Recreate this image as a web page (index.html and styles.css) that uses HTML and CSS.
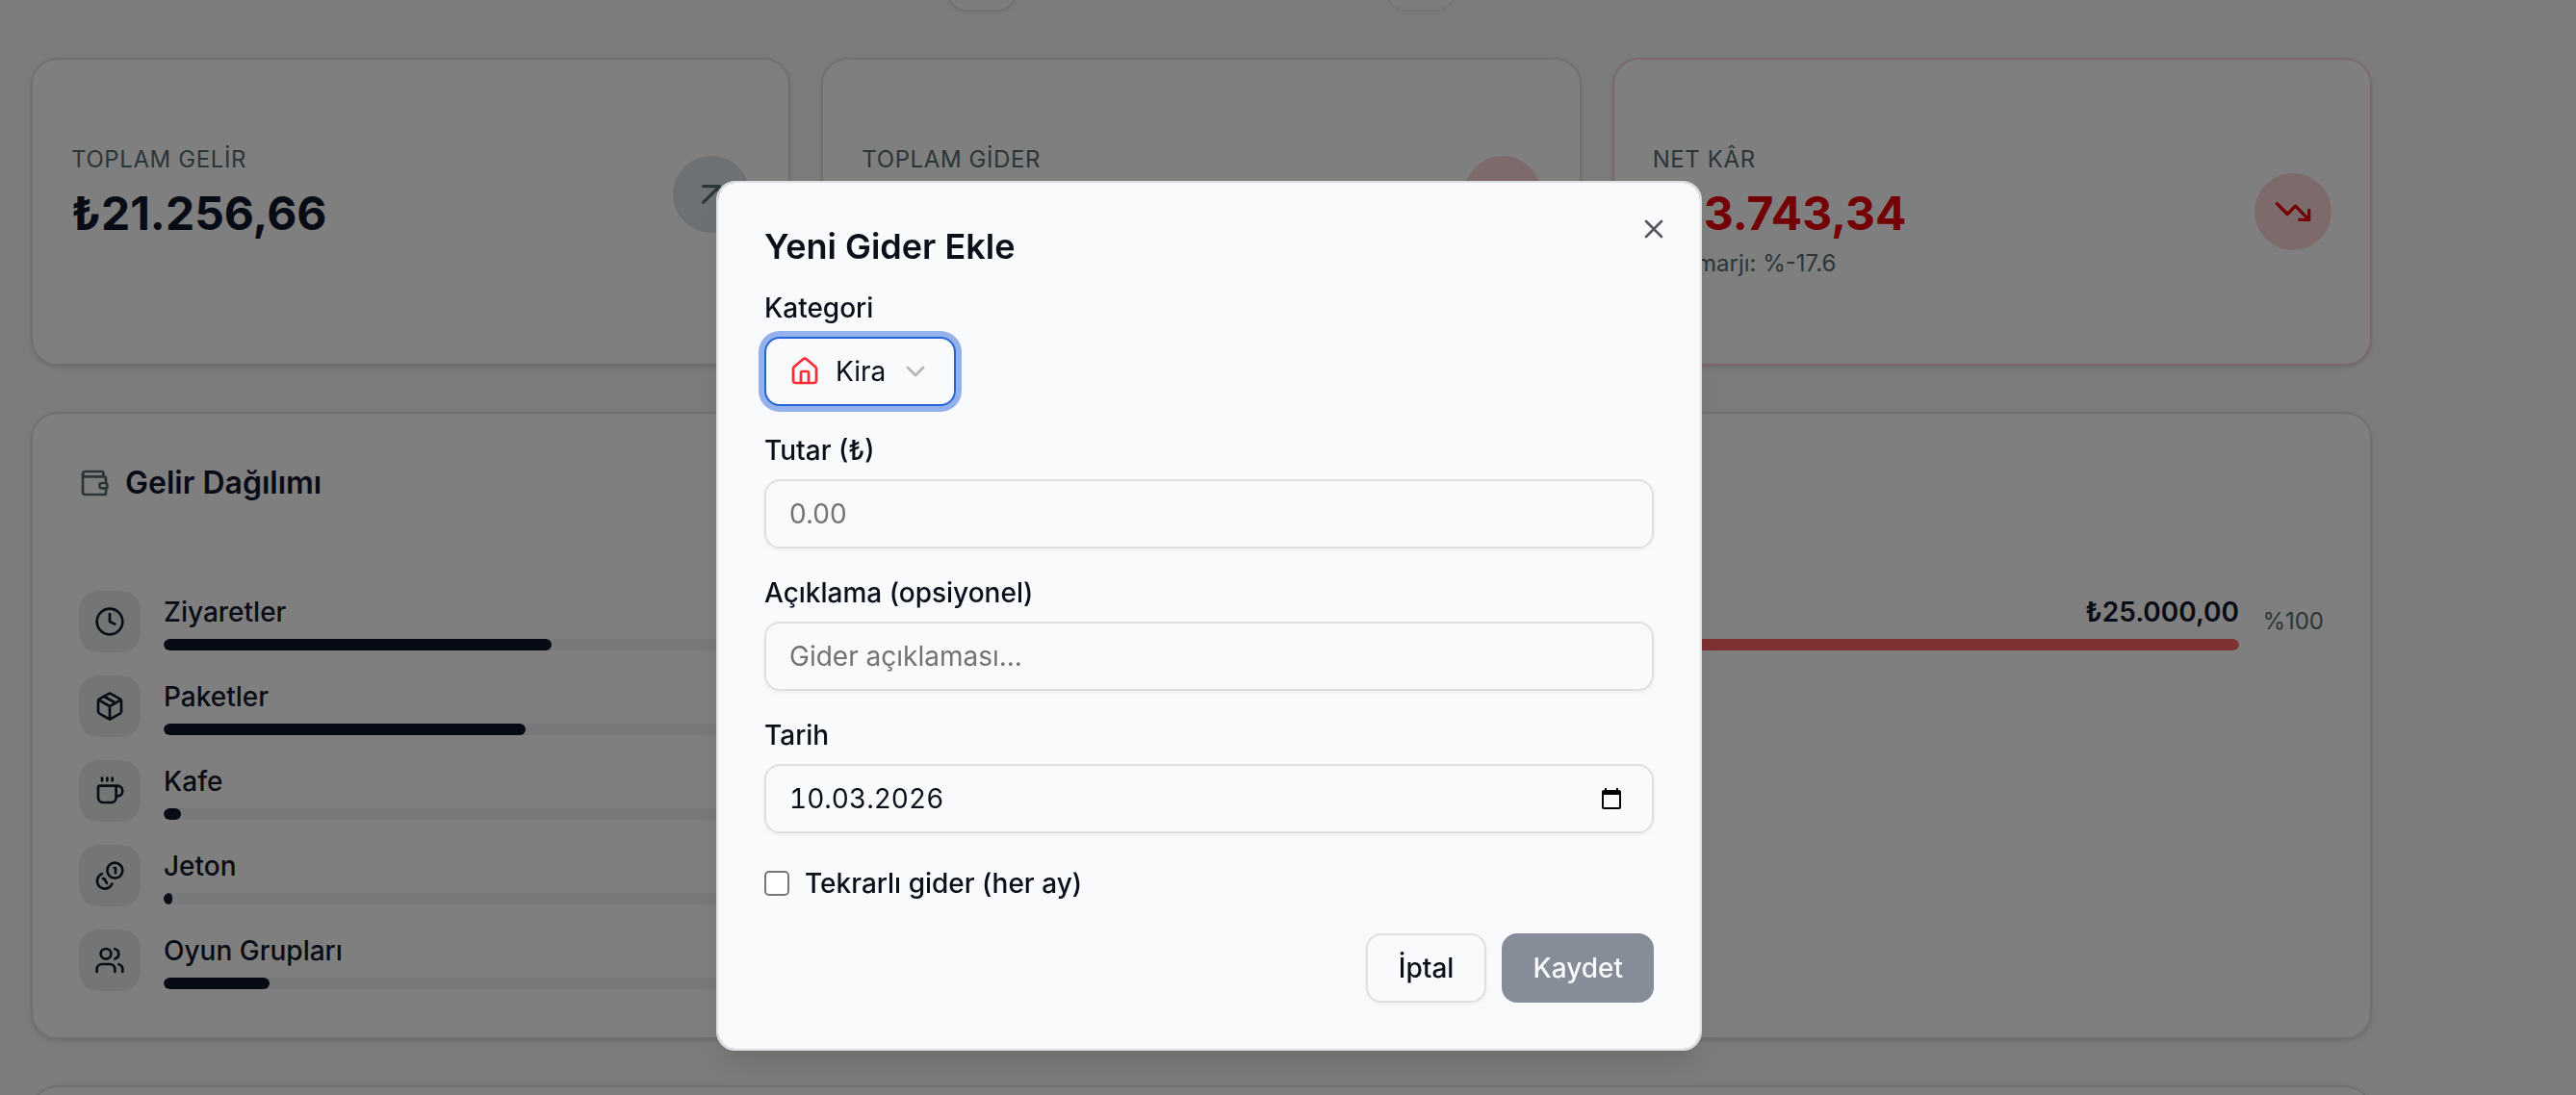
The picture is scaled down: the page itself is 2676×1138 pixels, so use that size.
FILE: index.html
```html
<!DOCTYPE html>
<html lang="tr">

<head>
    <meta charset="UTF-8">
    <meta name="viewport" content="width=device-width, initial-scale=1.0">
    <title>Gelir Gider</title>
    <link rel="stylesheet" href="styles.css">
</head>

<body>
    <main class="page">
        <div class="period">
            <button type="button" class="period-btn" aria-label="Önceki"></button>
            <button type="button" class="period-btn" aria-label="Sonraki" disabled></button>
        </div>

        <section class="stats">
            <div class="card stat">
                <div class="stat-text">
                    <p class="stat-label">TOPLAM GELİR</p>
                    <p class="stat-value">₺21.256,66</p>
                </div>
                <span class="stat-icon">
                    <svg class="icon" viewBox="0 0 24 24"><path d="M7 7h10v10M7 17 17 7" /></svg>
                </span>
            </div>
            <div class="card stat">
                <div class="stat-text">
                    <p class="stat-label">TOPLAM GİDER</p>
                    <p class="stat-value">₺25.000,00</p>
                </div>
                <span class="stat-icon red">
                    <svg class="icon" viewBox="0 0 24 24"><path d="m7 7 10 10M17 7v10H7" /></svg>
                </span>
            </div>
            <div class="card stat stat-loss">
                <div class="stat-text">
                    <p class="stat-label">NET KÂR</p>
                    <p class="stat-value">₺-3.743,34</p>
                    <p class="stat-note">Kâr marjı: %-17.6</p>
                </div>
                <span class="stat-icon red">
                    <svg class="icon" viewBox="0 0 24 24"><path d="M16 17h6v-6" /><path d="m22 17-8.500-8.500-5 5L2 7" /></svg>
                </span>
            </div>
        </section>

        <section class="breakdowns">
            <div class="card breakdown">
                <h2>
                    <svg class="icon" viewBox="0 0 24 24"><path d="M19 7V4a1 1 0 0 0-1-1H5a2 2 0 0 0 0 4h15a1 1 0 0 1 1 1v4h-3a2 2 0 0 0 0 4h3a1 1 0 0 0 1-1v-2a1 1 0 0 0-1-1" /><path d="M3 5v14a2 2 0 0 0 2 2h15a1 1 0 0 0 1-1v-4" /></svg>
                    Gelir Dağılımı
                </h2>
                <ul class="rows">
                    <li class="row">
                        <span class="row-icon"><svg class="icon" viewBox="0 0 24 24"><circle cx="12" cy="12" r="10" /><path d="M12 6v6l4 2" /></svg></span>
                        <div class="row-main">
                            <div class="row-head"><span>Ziyaretler</span></div>
                            <div class="track"><div class="fill" style="width: 44%"></div></div>
                        </div>
                        <span class="row-percent">%44</span>
                    </li>
                    <li class="row">
                        <span class="row-icon"><svg class="icon" viewBox="0 0 24 24"><path d="M11 21.700a2 2 0 0 0 2 0l7-4a2 2 0 0 0 1-1.700V8a2 2 0 0 0-1-1.700l-7-4a2 2 0 0 0-2 0l-7 4A2 2 0 0 0 3 8v8a2 2 0 0 0 1 1.700z" /><path d="M12 22V12M3.300 7 12 12l8.700-5M7.500 4.300l9 5.100" /></svg></span>
                        <div class="row-main">
                            <div class="row-head"><span>Paketler</span></div>
                            <div class="track"><div class="fill" style="width: 41%"></div></div>
                        </div>
                        <span class="row-percent">%41</span>
                    </li>
                    <li class="row">
                        <span class="row-icon"><svg class="icon" viewBox="0 0 24 24"><path d="M10 2v2M14 2v2M6 2v2M16 8a1 1 0 0 1 1 1v8a4 4 0 0 1-4 4H7a4 4 0 0 1-4-4V9a1 1 0 0 1 1-1h14a4 4 0 1 1 0 8h-1" /></svg></span>
                        <div class="row-main">
                            <div class="row-head"><span>Kafe</span></div>
                            <div class="track"><div class="fill" style="width: 2%"></div></div>
                        </div>
                        <span class="row-percent">%2</span>
                    </li>
                    <li class="row">
                        <span class="row-icon"><svg class="icon" viewBox="0 0 24 24"><circle cx="16" cy="8" r="6" /><path d="M6 10.600a6 6 0 1 0 7.800 7.800M15.500 6h1v4M6.700 14.300h1l2 3.500" /></svg></span>
                        <div class="row-main">
                            <div class="row-head"><span>Jeton</span></div>
                            <div class="track"><div class="fill" style="width: 1%"></div></div>
                        </div>
                        <span class="row-percent">%1</span>
                    </li>
                    <li class="row">
                        <span class="row-icon"><svg class="icon" viewBox="0 0 24 24"><path d="M16 21v-2a4 4 0 0 0-4-4H6a4 4 0 0 0-4 4v2M22 21v-2a4 4 0 0 0-3-3.870M16 3.130a4 4 0 0 1 0 7.750" /><circle cx="9" cy="7" r="4" /></svg></span>
                        <div class="row-main">
                            <div class="row-head"><span>Oyun Grupları</span></div>
                            <div class="track"><div class="fill" style="width: 12%"></div></div>
                        </div>
                        <span class="row-percent">%12</span>
                    </li>
                </ul>
            </div>

            <div class="card breakdown">
                <h2>Gider Dağılımı</h2>
                <ul class="rows">
                    <li class="row">
                        <span class="row-icon"></span>
                        <div class="row-main">
                            <div class="row-head"><span>Kira</span><strong>₺25.000,00</strong></div>
                            <div class="track"><div class="fill fill-red" style="width: 100%"></div></div>
                        </div>
                        <span class="row-percent">%100</span>
                    </li>
                </ul>
            </div>
        </section>

        <section class="card next-card"></section>
    </main>

    <div class="overlay">
        <form class="dialog" role="dialog" aria-labelledby="dialog-title">
            <button type="button" class="close" aria-label="Kapat">
                <svg class="icon" viewBox="0 0 24 24"><path d="M18 6 6 18M6 6l12 12" /></svg>
            </button>
            <h1 id="dialog-title">Yeni Gider Ekle</h1>

            <div class="field">
                <label for="category">Kategori</label>
                <div class="select-wrap">
                    <svg class="icon icon-house" viewBox="0 0 24 24"><path d="M15 21v-8a1 1 0 0 0-1-1h-4a1 1 0 0 0-1 1v8" /><path d="M3 10a2 2 0 0 1 .7-1.500l7-6a2 2 0 0 1 2.600 0l7 6A2 2 0 0 1 21 10v9a2 2 0 0 1-2 2H5a2 2 0 0 1-2-2z" /></svg>
                    <select id="category">
                        <option>Kira</option>
                    </select>
                    <svg class="icon icon-chevron" viewBox="0 0 24 24"><path d="m6 9 6 6 6-6" /></svg>
                </div>
            </div>

            <div class="field">
                <label for="amount">Tutar (₺)</label>
                <input type="text" id="amount" inputmode="decimal" placeholder="0.00">
            </div>

            <div class="field">
                <label for="description">Açıklama (opsiyonel)</label>
                <input type="text" id="description" placeholder="Gider açıklaması...">
            </div>

            <div class="field">
                <label for="date">Tarih</label>
                <div class="date-wrap">
                    <input type="text" id="date" value="10.03.2026">
                    <svg class="icon-calendar" viewBox="0 0 24 24"><path d="M20 3h-1V1h-2v2H7V1H5v2H4c-1.100 0-2 .9-2 2v16c0 1.100.9 2 2 2h16c1.100 0 2-.9 2-2V5c0-1.100-.9-2-2-2zm0 18H4V8h16v13z" /></svg>
                </div>
            </div>

            <div class="check">
                <input type="checkbox" id="recurring">
                <label for="recurring">Tekrarlı gider (her ay)</label>
            </div>

            <div class="actions">
                <button type="button" class="btn btn-outline">İptal</button>
                <button type="submit" class="btn btn-primary" disabled>Kaydet</button>
            </div>
        </form>
    </div>
</body>

</html>
```
FILE: styles.css
```css
* {
    box-sizing: border-box;
}

body {
    font-family: Inter, "Liberation Sans", sans-serif;
    font-size: 28px;
    line-height: 40px;
    margin: 0;
    height: 100vh;
    overflow: hidden;
    color: #0f172a;
    background-color: #f9f9f9;
}

h1,
h2,
p,
ul {
    margin: 0;
    padding: 0;
}

ul {
    list-style: none;
}

button,
input,
select {
    font: inherit;
    color: inherit;
}

.icon {
    display: block;
    width: 32px;
    height: 32px;
    flex-shrink: 0;
    fill: none;
    stroke: currentColor;
    stroke-width: 2;
    stroke-linecap: round;
    stroke-linejoin: round;
}

.page {
    padding: 0 212px 0 32px;
    display: flex;
    flex-direction: column;
    gap: 48px;
}

/* only the bottom edge of the period buttons is scrolled into view */
.period {
    height: 12px;
    display: flex;
    align-items: flex-end;
    justify-content: center;
    gap: 384px;
}

.period-btn {
    flex-shrink: 0;
    width: 72px;
    height: 72px;
    border: 2px solid #e0e3e5;
    border-radius: 20px;
    background: #fbfbfb;
    box-shadow: 0 2px 4px rgba(0, 0, 0, 0.06);
}

.period-btn:disabled {
    opacity: 0.6;
}

.card {
    background: white;
    border: 2px solid #dfe2e3;
    border-radius: 28px;
    box-shadow: 0 2px 6px rgba(0, 0, 0, 0.1), 0 2px 4px -2px rgba(0, 0, 0, 0.1);
}

.stats {
    display: grid;
    grid-template-columns: repeat(3, 1fr);
    gap: 32px;
}

.stat {
    padding: 88px 40px;
    display: flex;
    align-items: flex-start;
    justify-content: space-between;
}

.stat-label,
.stat-note {
    font-size: 24px;
    line-height: 32px;
    color: #586b70;
}

.stat-label {
    letter-spacing: 0.025em;
}

.stat-value {
    margin-top: 8px;
    font-size: 48px;
    line-height: 64px;
    font-weight: 700;
}

.stat-note {
    margin-top: 4px;
}

.stat-icon {
    width: 80px;
    height: 80px;
    margin-top: 12px;
    border-radius: 50%;
    display: flex;
    align-items: center;
    justify-content: center;
    color: #586b70;
    background: #dde2e9;
}

.stat-icon .icon {
    width: 40px;
    height: 40px;
}

.stat-icon.red {
    color: #e7000b;
    background: #fad7d8;
}

.stat-loss {
    align-items: center;
    border-color: #fad2d2;
}

.stat-loss .stat-value {
    color: #e7000b;
}

.stat-loss .stat-icon {
    margin-top: 0;
}

.breakdowns {
    display: grid;
    grid-template-columns: repeat(2, 1fr);
    gap: 48px;
}

.breakdown {
    padding: 48px;
}

.breakdown h2 {
    display: flex;
    align-items: center;
    gap: 16px;
    margin-bottom: 88px;
    font-size: 32px;
    line-height: 48px;
    font-weight: 600;
}

.breakdown h2 .icon {
    color: #586b70;
}

.rows {
    display: flex;
    flex-direction: column;
    gap: 24px;
}

.row {
    display: flex;
    align-items: center;
    gap: 24px;
}

.row-icon {
    width: 64px;
    height: 64px;
    border-radius: 20px;
    display: flex;
    align-items: center;
    justify-content: center;
    background: #e8ebea;
}

.row-main {
    flex: 1;
}

.row-head {
    display: flex;
    justify-content: space-between;
    margin-bottom: 8px;
    font-weight: 500;
}

.row-head strong {
    font-weight: 600;
}

.track {
    height: 12px;
    border-radius: 6px;
    overflow: hidden;
    background: #f0f2f4;
}

.fill {
    height: 100%;
    border-radius: 6px;
    background: #0f172a;
}

.fill-red {
    background: #ff6467;
}

.row-percent {
    width: 64px;
    font-size: 24px;
    line-height: 32px;
    text-align: right;
    color: #586b70;
}

.next-card {
    height: 200px;
}

.overlay {
    position: fixed;
    inset: 0;
    padding: 188px 164px 0 0;
    display: flex;
    align-items: flex-start;
    justify-content: center;
    background: rgba(0, 0, 0, 0.5);
}

.dialog {
    position: relative;
    width: 1024px;
    padding: 48px;
    display: flex;
    flex-direction: column;
    gap: 32px;
    color: #0a0f1a;
    background: #f8fafc;
    background-clip: padding-box;
    border: 2px solid #dcdee2;
    border-radius: 20px;
    box-shadow: 0 20px 30px -6px rgba(0, 0, 0, 0.1), 0 8px 12px -8px rgba(0, 0, 0, 0.1);
}

.dialog h1 {
    font-size: 36px;
    line-height: 36px;
    font-weight: 600;
}

.close {
    position: absolute;
    top: 32px;
    right: 32px;
    padding: 0;
    border: none;
    background: none;
    color: #55585e;
    cursor: pointer;
}

.field {
    display: flex;
    flex-direction: column;
    gap: 16px;
}

.field label,
.check label {
    line-height: 28px;
    font-weight: 500;
}

.field input {
    width: 100%;
    height: 72px;
    padding: 0 24px;
    border: 2px solid #dddfe2;
    border-radius: 16px;
    background: transparent;
    box-shadow: 0 2px 4px rgba(0, 0, 0, 0.05);
}

.field input::placeholder {
    color: #737373;
    opacity: 1;
}

.select-wrap,
.date-wrap {
    position: relative;
}

.select-wrap {
    align-self: flex-start;
}

.select-wrap select {
    appearance: none;
    display: block;
    height: 72px;
    padding: 0 70px 0 72px;
    border: 2px solid #2563d9;
    border-radius: 16px;
    outline: none;
    background: #f8fafc;
    box-shadow: 0 0 0 6px #93b1eb;
}

.icon-house,
.icon-chevron,
.icon-calendar {
    position: absolute;
    top: 20px;
    pointer-events: none;
}

.icon-house {
    left: 26px;
    color: #fb2c36;
}

.icon-chevron {
    right: 26px;
    color: #b4b6b9;
}

#date {
    display: block;
    font-variant-numeric: tabular-nums;
}

.icon-calendar {
    top: 24px;
    right: 32px;
    width: 24px;
    height: 24px;
}

.check {
    height: 40px;
    display: flex;
    align-items: center;
    gap: 16px;
}

.check input {
    appearance: none;
    width: 26px;
    height: 26px;
    margin: 0;
    border: 2px solid #767676;
    border-radius: 5px;
    background: white;
}

.check input:checked {
    background: #0f172a;
}

.actions {
    display: flex;
    justify-content: flex-end;
    gap: 16px;
}

.btn {
    height: 72px;
    padding: 0 32px;
    border-radius: 16px;
    border: none;
    font-weight: 500;
    cursor: pointer;
}

.btn-outline {
    border: 2px solid #dddfe2;
    background: #f8fafc;
    box-shadow: 0 2px 4px rgba(0, 0, 0, 0.05);
}

.btn-primary {
    color: #f8fafc;
    background: #868d98;
}
```
